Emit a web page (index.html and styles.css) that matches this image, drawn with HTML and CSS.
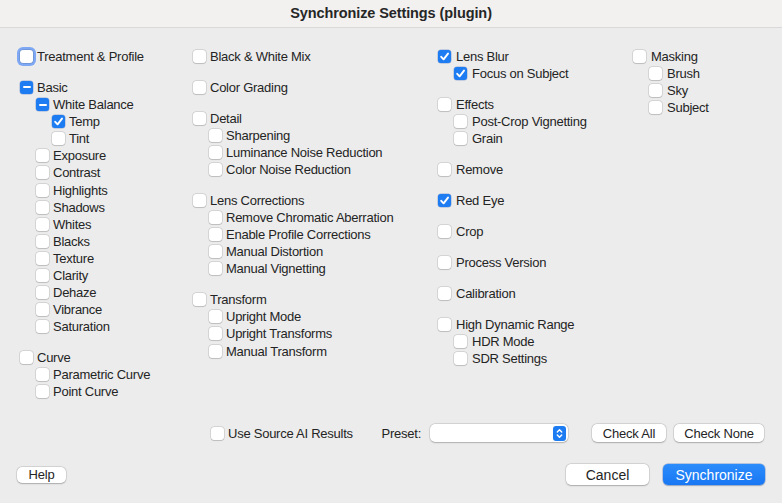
FILE: index.html
```html
<!DOCTYPE html>
<html>
<head>
<meta charset="utf-8">
<link rel="stylesheet" href="styles.css">
</head>
<body>
<div class="window">
  <div class="titlebar">Synchronize Settings (plugin)</div>
  <div class="columns">
    <div class="col col1">
      <div class="group">
        <label class="item"><span class="cb focus"></span>Treatment &amp; Profile</label>
      </div>
      <div class="group">
        <label class="item"><span class="cb mixed"><i></i></span>Basic</label>
        <label class="item l1"><span class="cb mixed"><i></i></span>White Balance</label>
        <label class="item l2"><span class="cb on"><svg viewBox="0 0 13 13"><path d="M3.2 6.8 L5.6 9.3 L10 3.6"/></svg></span>Temp</label>
        <label class="item l2"><span class="cb"></span>Tint</label>
        <label class="item l1"><span class="cb"></span>Exposure</label>
        <label class="item l1"><span class="cb"></span>Contrast</label>
        <label class="item l1"><span class="cb"></span>Highlights</label>
        <label class="item l1"><span class="cb"></span>Shadows</label>
        <label class="item l1"><span class="cb"></span>Whites</label>
        <label class="item l1"><span class="cb"></span>Blacks</label>
        <label class="item l1"><span class="cb"></span>Texture</label>
        <label class="item l1"><span class="cb"></span>Clarity</label>
        <label class="item l1"><span class="cb"></span>Dehaze</label>
        <label class="item l1"><span class="cb"></span>Vibrance</label>
        <label class="item l1"><span class="cb"></span>Saturation</label>
      </div>
      <div class="group">
        <label class="item"><span class="cb"></span>Curve</label>
        <label class="item l1"><span class="cb"></span>Parametric Curve</label>
        <label class="item l1"><span class="cb"></span>Point Curve</label>
      </div>
    </div>
    <div class="col col2">
      <div class="group">
        <label class="item"><span class="cb"></span>Black &amp; White Mix</label>
      </div>
      <div class="group">
        <label class="item"><span class="cb"></span>Color Grading</label>
      </div>
      <div class="group">
        <label class="item"><span class="cb"></span>Detail</label>
        <label class="item l1"><span class="cb"></span>Sharpening</label>
        <label class="item l1"><span class="cb"></span>Luminance Noise Reduction</label>
        <label class="item l1"><span class="cb"></span>Color Noise Reduction</label>
      </div>
      <div class="group">
        <label class="item"><span class="cb"></span>Lens Corrections</label>
        <label class="item l1"><span class="cb"></span>Remove Chromatic Aberration</label>
        <label class="item l1"><span class="cb"></span>Enable Profile Corrections</label>
        <label class="item l1"><span class="cb"></span>Manual Distortion</label>
        <label class="item l1"><span class="cb"></span>Manual Vignetting</label>
      </div>
      <div class="group">
        <label class="item"><span class="cb"></span>Transform</label>
        <label class="item l1"><span class="cb"></span>Upright Mode</label>
        <label class="item l1"><span class="cb"></span>Upright Transforms</label>
        <label class="item l1"><span class="cb"></span>Manual Transform</label>
      </div>
    </div>
    <div class="col col3">
      <div class="group">
        <label class="item"><span class="cb on"><svg viewBox="0 0 13 13"><path d="M3.2 6.8 L5.6 9.3 L10 3.6"/></svg></span>Lens Blur</label>
        <label class="item l1"><span class="cb on"><svg viewBox="0 0 13 13"><path d="M3.2 6.8 L5.6 9.3 L10 3.6"/></svg></span>Focus on Subject</label>
      </div>
      <div class="group">
        <label class="item"><span class="cb"></span>Effects</label>
        <label class="item l1"><span class="cb"></span>Post-Crop Vignetting</label>
        <label class="item l1"><span class="cb"></span>Grain</label>
      </div>
      <div class="group">
        <label class="item"><span class="cb"></span>Remove</label>
      </div>
      <div class="group">
        <label class="item"><span class="cb on"><svg viewBox="0 0 13 13"><path d="M3.2 6.8 L5.6 9.3 L10 3.6"/></svg></span>Red Eye</label>
      </div>
      <div class="group">
        <label class="item"><span class="cb"></span>Crop</label>
      </div>
      <div class="group">
        <label class="item"><span class="cb"></span>Process Version</label>
      </div>
      <div class="group">
        <label class="item"><span class="cb"></span>Calibration</label>
      </div>
      <div class="group">
        <label class="item"><span class="cb"></span>High Dynamic Range</label>
        <label class="item l1"><span class="cb"></span>HDR Mode</label>
        <label class="item l1"><span class="cb"></span>SDR Settings</label>
      </div>
    </div>
    <div class="col col4">
      <div class="group">
        <label class="item"><span class="cb"></span>Masking</label>
        <label class="item l1"><span class="cb"></span>Brush</label>
        <label class="item l1"><span class="cb"></span>Sky</label>
        <label class="item l1"><span class="cb"></span>Subject</label>
      </div>
    </div>
  </div>
  <div class="options">
    <label class="item source"><span class="cb"></span>Use Source AI Results</label>
    <span class="preset-label">Preset:</span>
    <div class="popup">
      <span class="stepper"><svg viewBox="0 0 13 15"><path d="M4.3 6 L6.5 3.8 L8.7 6 M4.3 9 L6.5 11.2 L8.7 9"/></svg></span>
    </div>
    <button class="btn small check-all">Check All</button>
    <button class="btn small check-none">Check None</button>
  </div>
  <div class="footer">
    <button class="btn help">Help</button>
    <button class="btn big cancel">Cancel</button>
    <button class="btn big primary">Synchronize</button>
  </div>
</div>
</body>
</html>
```

FILE: styles.css
```css
* { box-sizing: border-box; }
html, body { margin: 0; padding: 0; }
body {
  width: 782px;
  height: 503px;
  overflow: hidden;
  background: #ececec;
  font-family: "Liberation Sans", Arial, sans-serif;
  font-size: 13px;
  color: #242424;
  letter-spacing: -0.25px;
}
.window {
  display: flex;
  flex-direction: column;
  height: 503px;
}
.titlebar {
  height: 28px;
  flex: none;
  background: #f2f1f0;
  border-bottom: 1px solid #d9d9d9;
  text-align: center;
  font-weight: bold;
  font-size: 14.5px;
  letter-spacing: -0.1px;
  line-height: 26px;
  color: #262626;
}
.columns {
  flex: 1;
  display: grid;
  grid-template-columns: 173px 245px 195px 1fr;
  padding: 20px 0 0 20px;
}
.group {
  display: flex;
  flex-direction: column;
  margin-bottom: 13.8px;
}
.item {
  display: flex;
  align-items: center;
  height: 17.1px;
  white-space: nowrap;
}
.item.l1 { padding-left: 16px; }
.item.l2 { padding-left: 32px; }
.cb {
  flex: none;
  width: 13px;
  height: 13px;
  margin-right: 4px;
  border-radius: 3px;
  background: #ffffff;
  box-shadow: 0 0 0 0.5px rgba(0,0,0,0.18), 0 0.5px 1px rgba(0,0,0,0.12);
  display: flex;
  align-items: center;
  justify-content: center;
}
.col3 .cb, .col4 .cb { margin-right: 5px; }
.cb.focus {
  box-shadow: 0 0 0 0.5px rgba(0,0,0,0.2), 0 0 0 3px rgba(90,145,245,0.75);
}
.cb.on, .cb.mixed {
  background: #1d7cf2;
  box-shadow: 0 0 0 0.5px rgba(0,60,170,0.35);
}
.cb svg { width: 13px; height: 13px; display: block; }
.cb svg path {
  fill: none;
  stroke: #ffffff;
  stroke-width: 1.9;
  stroke-linecap: round;
  stroke-linejoin: round;
}
.cb.mixed i {
  display: block;
  width: 8px;
  height: 2px;
  border-radius: 1px;
  background: #ffffff;
}
.options {
  flex: none;
  height: 18px;
  display: flex;
  align-items: center;
  padding: 0 18px 0 211px;
  margin-bottom: 22px;
}
.source { margin-right: auto; }
.preset-label { margin-right: 9px; }
.popup {
  width: 138px;
  height: 18px;
  background: #ffffff;
  border-radius: 5px;
  box-shadow: 0 0 0 0.5px rgba(0,0,0,0.15), 0 0.5px 1.5px rgba(0,0,0,0.2);
  display: flex;
  align-items: center;
  justify-content: flex-end;
  padding-right: 2px;
  margin-right: 24px;
}
.stepper {
  width: 13px;
  height: 15px;
  border-radius: 3px;
  background: #1d7cf2;
  display: block;
}
.stepper svg { width: 13px; height: 15px; display: block; }
.stepper svg path {
  fill: none;
  stroke: #ffffff;
  stroke-width: 1.4;
  stroke-linecap: round;
  stroke-linejoin: round;
}
.btn {
  font-family: "Liberation Sans", Arial, sans-serif;
  color: #242424;
  letter-spacing: -0.2px;
  background: #ffffff;
  border: none;
  border-radius: 5px;
  box-shadow: 0 0 0 0.5px rgba(0,0,0,0.14), 0 0.5px 1.5px rgba(0,0,0,0.22);
  padding: 0;
  margin: 0;
  text-align: center;
}
.btn.small { height: 18px; font-size: 13px; }
.check-all { width: 74px; margin-right: 8px; }
.check-none { width: 90px; }
.footer {
  flex: none;
  display: flex;
  align-items: center;
  height: 21px;
  padding: 0 17px 0 17px;
  margin-bottom: 18px;
}
.help {
  width: 49px;
  height: 16px;
  font-size: 13px;
  margin-right: auto;
}
.btn.big {
  height: 21px;
  font-size: 14px;
  letter-spacing: 0;
}
.cancel { width: 83px; margin-right: 14px; }
.primary {
  width: 102px;
  color: #ffffff;
  background: linear-gradient(#2b8cfc, #1877f2);
  box-shadow: 0 0 0 0.5px rgba(0,70,200,0.4), 0 0.5px 1.5px rgba(0,0,0,0.2);
}
```
